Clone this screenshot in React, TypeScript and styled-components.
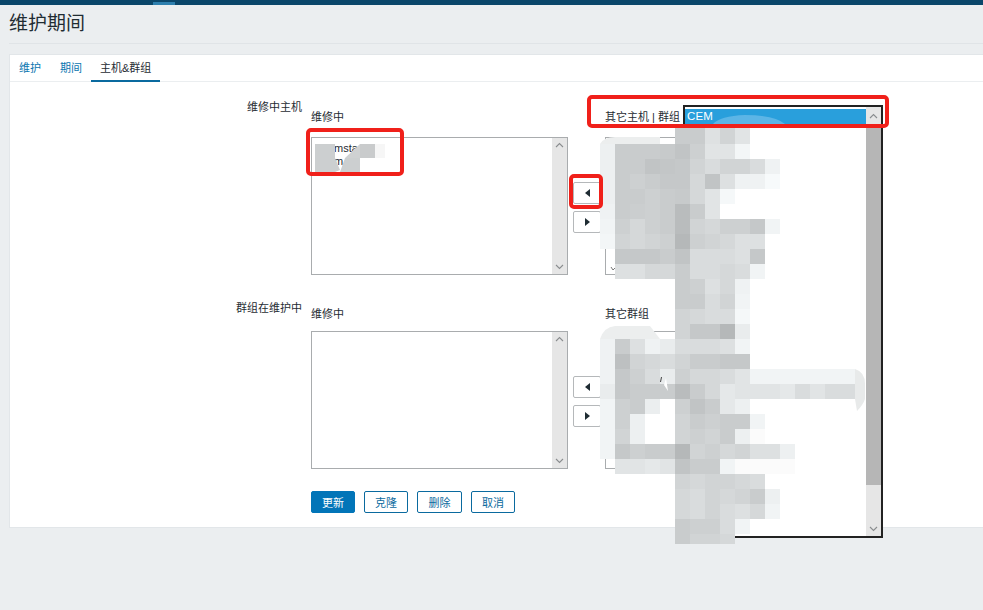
import React from "react";
import styled, { createGlobalStyle } from "styled-components";

const Global = createGlobalStyle`
  html, body { margin: 0; padding: 0; background: #ebeef0; }
  body { font-family: "Liberation Sans", "Noto Sans CJK SC", sans-serif; font-size: 11px; color: #1f2c33; overflow: hidden; }
`;

const Page = styled.div`
  position: relative;
  width: 983px;
  height: 610px;
  overflow: hidden;
  background: #ebeef0;
`;
const TopBar = styled.div`
  height: 5px;
  background: #0a466a;
  padding-left: 153px;
`;
const TopMarker = styled.div`
  width: 22px;
  height: 5px;
  background: linear-gradient(#0a466a 0 2px, #2d7fae 2px);
`;
const Header = styled.header`
  height: 38px;
  margin-left: 9px;
  border-bottom: 1px solid #e0e4e7;
  display: flex;
  align-items: center;
`;
const Title = styled.h1`
  margin: 0 0 1px;
  font-size: 19px;
  font-weight: 400;
  line-height: 24px;
  color: #1f2c33;
`;
const Card = styled.section`
  margin: 10px 0 0 9px;
  height: 472px;
  background: #fff;
  border: 1px solid #e2e6e9;
  border-right: 0;
`;
const Tabs = styled.nav`
  height: 27px;
  border-bottom: 1px solid #ebeef0;
  display: flex;
  box-sizing: border-box;
`;
const Tab = styled.a<{ $active?: boolean }>`
  padding: 0 9px;
  line-height: 26px;
  height: 27px;
  box-sizing: border-box;
  font-size: 11px;
  color: ${(p) => (p.$active ? "#1f2c33" : "#0b76b0")};
  border-bottom: ${(p) => (p.$active ? "2px solid #0a6a9f" : "0")};
  &:first-child {
    padding-right: 10px;
  }
`;
const Form = styled.div`
  padding-top: 17px;
  display: flex;
  flex-direction: column;
  gap: 26px;
`;
const Row = styled.div`
  display: grid;
  grid-template-columns: 292px 1fr;
  column-gap: 9px;
`;
const RowLabel = styled.label<{ $top?: number }>`
  text-align: right;
  line-height: 14px;
  font-size: 11px;
  padding-top: ${(p) => p.$top ?? 0}px;
`;
const RowBody = styled.div`
  display: flex;
  flex-direction: column;
`;
const Captions = styled.div<{ $top: number; $gap: number }>`
  display: grid;
  grid-template-columns: 294px 1fr;
  padding-top: ${(p) => p.$top}px;
  margin-bottom: ${(p) => p.$gap}px;
  line-height: 14px;
`;
const Lists = styled.div`
  display: flex;
  height: 138px;
`;
const ListBox = styled.div`
  width: 257px;
  height: 138px;
  box-sizing: border-box;
  border: 1px solid #a9acae;
  background: #fff;
  display: flex;
  justify-content: space-between;
`;
const ListItems = styled.div`
  padding: 4px 0 0 22px;
  font-size: 11px;
  line-height: 13px;
  color: #1f2c33;
`;
const Scrollbar = styled.div`
  width: 15px;
  background: #e6e6e6;
  display: flex;
  flex-direction: column;
  justify-content: space-between;
  align-items: center;
  padding: 4px 0;
  box-sizing: border-box;
`;
const Transfer = styled.div`
  width: 28px;
  margin: 0 4px 0 5px;
  padding-top: 45px;
  display: flex;
  flex-direction: column;
  gap: 7px;
`;
const ArrowButton = styled.button`
  width: 28px;
  height: 22px;
  padding: 0;
  box-sizing: border-box;
  background: #fff;
  border: 1px solid #b5b8ba;
  border-radius: 2px;
  display: flex;
  align-items: center;
  justify-content: center;
`;
const Tri = styled.span<{ $left?: boolean }>`
  width: 0;
  height: 0;
  border-top: 4px solid transparent;
  border-bottom: 4px solid transparent;
  ${(p) => (p.$left ? "border-right: 5px solid #1f2c33;" : "border-left: 5px solid #1f2c33;")}
`;
const Actions = styled.div`
  display: flex;
  gap: 9px;
  margin: 22px 0 0 301px;
`;
const ActionButton = styled.button<{ $primary?: boolean; $w?: number }>`
  width: ${(p) => p.$w ?? 44}px;
  height: 22px;
  padding: 0;
  box-sizing: border-box;
  font: 11px "Liberation Sans", "Noto Sans CJK SC", sans-serif;
  border-radius: 2px;
  border: 1px solid ${(p) => (p.$primary ? "#0275b8" : "#0a6a9f")};
  background: ${(p) => (p.$primary ? "#0275b8" : "#fff")};
  color: ${(p) => (p.$primary ? "#fff" : "#0b6a9e")};
`;
const Dropdown = styled.div`
  position: absolute;
  left: 683px;
  top: 105px;
  width: 200px;
  height: 433px;
  box-sizing: border-box;
  border: 2px solid #222;
  background: #fff;
  display: flex;
  justify-content: space-between;
`;
const Options = styled.div`
  flex: 1;
  padding-top: 2px;
`;
const Option = styled.div`
  height: 15px;
  padding-left: 2px;
  line-height: 15px;
  font-size: 11.5px;
  font-weight: 400;
  color: #fff;
  background: #299fdc;
  letter-spacing: 0.1px;
`;
const DropScroll = styled.div`
  width: 15px;
  background: #e6e6e6;
  display: flex;
  flex-direction: column;
`;
const ScrollEnd = styled.div<{ $h: number }>`
  height: ${(p) => p.$h}px;
  display: flex;
  align-items: center;
  justify-content: center;
  flex-shrink: 0;
`;
const ScrollThumb = styled.div`
  flex: 0 0 361px;
  background: #b6b6b6;
`;
const ScrollRest = styled.div`
  flex: 1;
  display: flex;
  flex-direction: column;
  justify-content: flex-end;
  align-items: center;
  padding-bottom: 4px;
`;
const Mosaic = styled.svg`
  position: absolute;
  left: 0;
  top: 0;
  pointer-events: none;
`;
const Note = styled.div<{ $x: number; $y: number; $w: number; $h: number }>`
  position: absolute;
  left: ${(p) => p.$x}px;
  top: ${(p) => p.$y}px;
  width: ${(p) => p.$w}px;
  height: ${(p) => p.$h}px;
  box-sizing: border-box;
  border: 4px solid #f0201a;
  border-radius: 5px;
`;

const Chevron = ({ up, color = "#8a8d8f" }: { up?: boolean; color?: string }) => (
  <svg width="9" height="6" viewBox="0 0 9 6">
    <path d={up ? "M1 5 L4.5 1.5 L8 5" : "M1 1 L4.5 4.5 L8 1"} fill="none" stroke={color} strokeWidth="1.1" />
  </svg>
);

const FakeScrollbar = () => (
  <Scrollbar>
    <Chevron up />
    <Chevron />
  </Scrollbar>
);

type MRow = [number, number, string[], number?];
// [y, first cell x, grey values, optional height], cells are 15px squares
const cells: MRow[] = [
  [128, 675, ["c8", "c8", "dd", "d0", "e0"], 16],
  [144, 600, ["ec", "c8", "c8", "c8", "c6", "c0", "cc", "e0", "e0", "f2"]],
  [159, 600, ["ec", "c8", "c8", "c0", "c2", "c4", "d0", "d8", "d0", "d0", "d8", "ee"]],
  [174, 600, ["ec", "c8", "cc", "c8", "c4", "c4", "d4", "c0", "dc", "ee", "ee", "f6"]],
  [189, 600, ["ec", "c8", "c8", "cc", "c8", "c6", "d4", "e0", "f4"]],
  [204, 600, ["ee", "c8", "ca", "cc", "c8", "b8", "c8", "e0"]],
  [219, 600, ["f0", "cc", "d4", "cc", "c8", "b8", "d0", "d4", "cc", "cc", "c4", "f0"]],
  [234, 600, ["f2", "d0", "d4", "d0", "cc", "b4", "cc", "d0", "d4", "dc", "dc"]],
  [249, 615, ["c4", "c4", "c4", "c8", "c0", "d8", "d8", "d8", "dc", "c4"]],
  [264, 615, ["dc", "dc", "d4", "d4", "c8", "d8", "d8", "d4", "d8", "f0"]],
  [279, 675, ["c8", "cc", "dc", "d4", "ee"]],
  [294, 675, ["c8", "c8", "d8", "d0", "f0"]],
  [309, 675, ["d0", "d4", "d8", "d8", "f4"]],
  [324, 675, ["d0", "c4", "c4", "b4", "e8"]],
  [339, 600, ["ee", "c8", "dc", "ee", "e8", "d8", "d8", "d8", "dc", "f0"]],
  [354, 600, ["ee", "bc", "d0", "d4", "d8", "d0", "c8", "c8", "c4", "c4"]],
  [369, 600, ["ee", "c4", "cc", "d8", "e8", "cc", "d4", "d4", "d8", "e0", "f0", "f0", "f0", "f0", "f0", "f0", "f0"]],
  [384, 600, ["e8", "c4", "c8", "c8", "c8", "b8", "c8", "d4", "e4", "e0", "e0", "e0", "e4", "d8", "e0", "d8", "d8"]],
  [399, 600, ["f0", "cc", "c8", "ea", "ff", "cc", "c0", "c8", "e4", "ec"]],
  [414, 600, ["f0", "cc", "ec", "ff", "ff", "d0", "c8", "cc", "c8", "c8", "f0"]],
  [429, 600, ["f0", "d0", "ec", "ff", "ff", "d0", "cc", "d0", "c8", "ec", "f8"]],
  [444, 600, ["f0", "c4", "cc", "c8", "c8", "b4", "d0", "cc", "d4", "d0", "dc", "dc", "ec"]],
  [459, 615, ["e0", "e0", "e4", "e0", "c0", "c8", "c8", "f0", "f8", "f8", "f8", "f8"]],
  [474, 675, ["d0", "d4", "d0", "d0", "d4", "d8"]],
  [489, 675, ["d4", "d8", "d0", "d4", "d0", "c8", "ec"]],
  [504, 675, ["d4", "d8", "d0", "d8", "dc", "d4", "f0"]],
  [519, 675, ["c8", "cc", "cc", "d8", "f0"]],
  [534, 675, ["c8", "d0", "d0", "d4"], 10],
];

const tone = (g: string) => {
  const v = Math.min(255, parseInt(g, 16) + 3);
  return v >= 250 ? `rgb(${v},${v},${v})` : `rgb(${v - 2},${v + 1},${v + 2})`;
};

const MosaicLayer = () => (
  <Mosaic width="983" height="610" viewBox="0 0 983 610">
    <defs>
      <filter id="soft" x="0" y="0" width="100%" height="100%">
        <feGaussianBlur stdDeviation="0.6" />
      </filter>
    </defs>
    {/* light-blue smear on the selected option */}
    <path d="M713 124 Q720 116 745 115 Q775 115 785 124 Z" fill="#5cb5e6" />
    {/* soft halo of the smears */}
    <path d="M600 144 Q604 137 615 137 L660 137 L660 144 Z" fill="#eceeee" />
    <path d="M600 339 Q604 327 615 326 L650 326 L660 339 Z" fill="#eceeee" />
    <path d="M855 369 Q865 372 865 384 L865 399 Q863 405 857 411 L855 399 Z" fill="#e8eaea" />
    <g filter="url(#soft)">
      {cells.map(([y, x0, row, h]) =>
        row.map((g, i) => (
          <rect key={`${y}-${i}`} x={x0 + i * 15} y={y} width="15" height={h ?? 15} fill={tone(g)} />
        ))
      )}
    </g>
    {/* smear over the hosts of the left list */}
    <rect x="315" y="144" width="20" height="28" fill="#cccfd0" />
    <path d="M335 158 L340 170 L335 172 Z" fill="#cccfd0" />
    <path d="M340 172 L345 158 L360 158 L360 172 Z" fill="#cccfd0" />
    <rect x="360" y="144" width="15" height="14" fill="#c9cbcc" />
    <path d="M345 158 L360 144 L360 158 Z" fill="#cfd1d2" />
    <rect x="375" y="144" width="10" height="14" fill="#f6f6f6" />
    {/* leftovers of the right lists that show through */}
    <path d="M611 267 L613 270 L615 268" fill="none" stroke="#777" strokeWidth="1" />
    <path d="M664 385 L668 391 L666 378 Z" fill="#fff" />
    <path d="M661.500 377 L660.500 382" stroke="#444" strokeWidth="1" />
  </Mosaic>
);

export default function App() {
  return (
    <Page>
      <Global />
      <TopBar>
        <TopMarker />
      </TopBar>
      <Header>
        <Title>维护期间</Title>
      </Header>
      <Card>
        <Tabs>
          <Tab>维护</Tab>
          <Tab>期间</Tab>
          <Tab $active>主机&amp;群组</Tab>
        </Tabs>
        <Form>
          <Row>
            <RowLabel $top={1}>维修中主机</RowLabel>
            <RowBody>
              <Captions $top={11} $gap={13}>
                <span>维修中</span>
                <span>其它主机 | 群组</span>
              </Captions>
              <Lists>
                <ListBox>
                  <ListItems>
                    mstar
                    <br />m
                  </ListItems>
                  <FakeScrollbar />
                </ListBox>
                <Transfer>
                  <ArrowButton>
                    <Tri $left />
                  </ArrowButton>
                  <ArrowButton>
                    <Tri />
                  </ArrowButton>
                </Transfer>
                <ListBox />
              </Lists>
            </RowBody>
          </Row>
          <Row>
            <RowLabel>群组在维护中</RowLabel>
            <RowBody>
              <Captions $top={6} $gap={10}>
                <span>维修中</span>
                <span>其它群组</span>
              </Captions>
              <Lists>
                <ListBox>
                  <ListItems />
                  <FakeScrollbar />
                </ListBox>
                <Transfer>
                  <ArrowButton>
                    <Tri $left />
                  </ArrowButton>
                  <ArrowButton>
                    <Tri />
                  </ArrowButton>
                </Transfer>
                <ListBox />
              </Lists>
            </RowBody>
          </Row>
        </Form>
        <Actions>
          <ActionButton $primary>更新</ActionButton>
          <ActionButton>克隆</ActionButton>
          <ActionButton $w={45}>删除</ActionButton>
          <ActionButton>取消</ActionButton>
        </Actions>
      </Card>
      <Dropdown>
        <Options>
          <Option>CEM</Option>
        </Options>
        <DropScroll>
          <ScrollEnd $h={17}>
            <Chevron up />
          </ScrollEnd>
          <ScrollThumb />
          <ScrollRest>
            <Chevron />
          </ScrollRest>
        </DropScroll>
      </Dropdown>
      <MosaicLayer />
      <Note $x={306} $y={128} $w={98} $h={48} />
      <Note $x={587} $y={95} $w={302} $h={33} />
      <Note $x={569} $y={174} $w={34} $h={35} />
    </Page>
  );
}
